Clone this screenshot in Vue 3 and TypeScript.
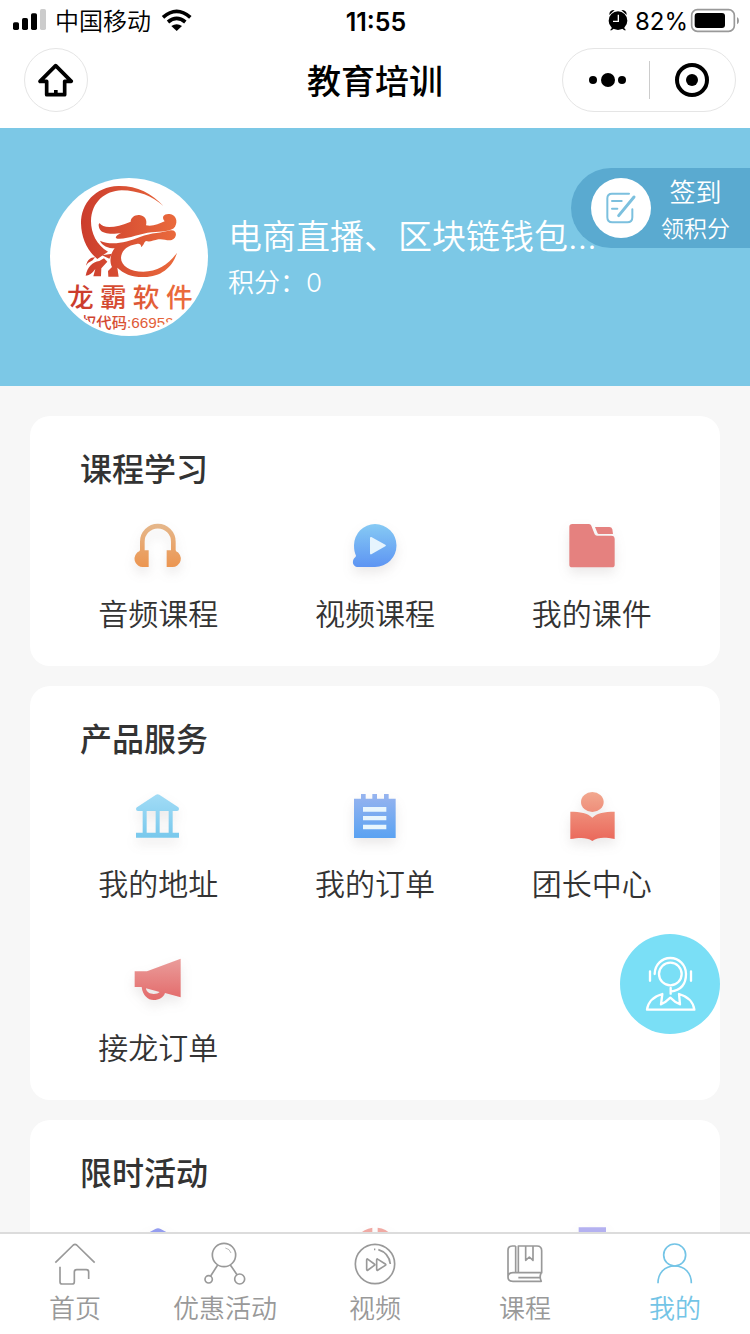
<script setup lang="ts">
interface Entry {
  icon: string
  label?: string
}
interface Section {
  title: string
  entries: Entry[]
}
interface Tab {
  icon: string
  label: string
  active?: boolean
}

const sections: Section[] = [
  {
    title: '课程学习',
    entries: [
      { icon: 'headphones', label: '音频课程' },
      { icon: 'play', label: '视频课程' },
      { icon: 'folder', label: '我的课件' },
    ],
  },
  {
    title: '产品服务',
    entries: [
      { icon: 'bank', label: '我的地址' },
      { icon: 'order', label: '我的订单' },
      { icon: 'reader', label: '团长中心' },
      { icon: 'megaphone', label: '接龙订单' },
    ],
  },
  {
    title: '限时活动',
    entries: [{ icon: 'hexagon' }, { icon: 'disc' }, { icon: 'board' }],
  },
]

const tabs: Tab[] = [
  { icon: 'tab-home', label: '首页' },
  { icon: 'tab-share', label: '优惠活动' },
  { icon: 'tab-video', label: '视频' },
  { icon: 'tab-book', label: '课程' },
  { icon: 'tab-me', label: '我的', active: true },
]
</script>

<template>
  <div class="page">
    <svg class="sprite" aria-hidden="true">
      <defs>
        <linearGradient id="g-orange" x1="0" y1="252" x2="0" y2="382" gradientUnits="userSpaceOnUse">
          <stop offset="0" stop-color="#e5b78b" /><stop offset="1" stop-color="#ec9550" />
        </linearGradient>
        <linearGradient id="g-play" x1="0" y1="252" x2="0" y2="382" gradientUnits="userSpaceOnUse">
          <stop offset="0" stop-color="#86caf4" /><stop offset="1" stop-color="#5d94f3" />
        </linearGradient>
        <linearGradient id="g-bank" x1="0" y1="72" x2="0" y2="204" gradientUnits="userSpaceOnUse">
          <stop offset="0" stop-color="#a2dcf6" /><stop offset="1" stop-color="#78c8ec" />
        </linearGradient>
        <linearGradient id="g-order" x1="0" y1="72" x2="0" y2="204" gradientUnits="userSpaceOnUse">
          <stop offset="0" stop-color="#97b4ef" /><stop offset="1" stop-color="#5aa2f2" />
        </linearGradient>
        <linearGradient id="g-reader" x1="0" y1="66" x2="0" y2="214" gradientUnits="userSpaceOnUse">
          <stop offset="0" stop-color="#f2a88f" /><stop offset="1" stop-color="#ea675a" />
        </linearGradient>
        <linearGradient id="g-mega" x1="0" y1="86" x2="0" y2="210" gradientUnits="userSpaceOnUse">
          <stop offset="0" stop-color="#ea9d9b" /><stop offset="1" stop-color="#e36a6a" />
        </linearGradient>
      </defs>

      <symbol id="headphones" viewBox="175 198 240 240">
        <path d="M248 334V305a46 46 0 0 1 93 0v29" fill="none" stroke="url(#g-orange)" stroke-width="14" />
        <path d="M267 331v50h-15a25 25 0 0 1-12-48v-2zM321 331v50h15a25 25 0 0 0 12-48v-2z" fill="url(#g-orange)" />
      </symbol>
      <symbol id="play" viewBox="825 198 240 240">
        <path d="M945 252a64 64 0 0 1 0 129h-50c-14 0-20-13-14-24 3-5 7-7 7-10-4-9-6-18-6-31a64 64 0 0 1 63-64z" fill="url(#g-play)" />
        <path d="M934 291l42 23q4 2 0 5l-42 24q-4 1-4-3v-46q0-4 4-3z" fill="#e6f4fd" />
      </symbol>
      <symbol id="folder" viewBox="155 18 240 240">
        <path d="M216 72h50q5 0 7 5l10 26q2 4 7 4h43q10 0 10 10v77q0 8-8 8H216q-9 0-9-8V80q0-8 9-8z" fill="#e5817f" />
        <path d="M284 81h43q7 0 9 7l2 14h-42q-4 0-5-4z" fill="#e5817f" />
      </symbol>
      <symbol id="bank" viewBox="145 18 240 240">
        <path d="M259 74q5-3 10 0l56 37q3 2 3 6 0 6-6 6h-13v65h19v15H199v-15h20v-65h-14q-6 0-6-6 0-4 4-6zM231 123v65h27v-65zm39 0v65h27v-65z" fill="url(#g-bank)" />
      </symbol>
      <symbol id="order" viewBox="795 18 240 240">
        <path d="M852 86h21V72h14v14h20V72h14v14h21V72h14v14h21v118H852z" fill="url(#g-order)" />
        <path d="M879 111h70v14h-70zm0 27h70v13h-70zm0 26h70v14h-70z" fill="#e8f6fd" />
      </symbol>
      <symbol id="reader" viewBox="125 18 240 240">
        <ellipse cx="246" cy="96" rx="34" ry="30" fill="url(#g-reader)" />
        <path d="M180 125c30 0 52 4 66 18 14-14 36-18 67-18v82c-29-5-50-6-67 6-17-12-38-10-66-6z" fill="url(#g-reader)" />
      </symbol>
      <symbol id="megaphone" viewBox="145 30 240 240">
        <path d="M195 124h37l101-38v116l-47-13c-5 14-18 21-34 21-18 0-33-14-36-39h-21zM229 175c1 12 12 17 23 17 8 0 15-2 18-6z" fill="url(#g-mega)" fill-rule="evenodd" />
      </symbol>
      <symbol id="hexagon" viewBox="355 0 240 240">
        <path d="M467 57q8-4 16 0l46 25q8 4 8 12v52q0 8-8 12l-46 25q-8 4-16 0l-46-25q-8-4-8-12V94q0-8 8-12z" fill="#949df0" />
      </symbol>
      <symbol id="disc" viewBox="1005 0 240 240">
        <path d="M1117 53v67h-58a67 67 0 0 1 58-67zm16 0a67 67 0 0 1 59 67h-59zm-74 83h133a67 67 0 0 1-133 0z" fill="#f0aaa4" />
      </symbol>
      <symbol id="board" viewBox="545 0 240 240">
        <path d="M625 52h82v136h-82z" fill="#b4b1f0" />
      </symbol>

      <symbol id="tab-home" viewBox="153 90 144 144">
        <path d="M166 158l54-53q5-4 10 0l54 53M180 170v45q0 7 7 7h29q7 0 7-7v-29q0-7 7-7h29q7 0 7 7v21" />
      </symbol>
      <symbol id="tab-share" viewBox="603 90 144 144">
        <circle cx="672" cy="135" r="35" />
        <circle cx="626" cy="208" r="11" />
        <circle cx="719" cy="207" r="15" />
        <path d="M653 165l-21 33M691 165l20 29" />
        <path d="M676 114q13 2 17 15" stroke-width="2" />
      </symbol>
      <symbol id="tab-video" viewBox="-57 90 144 144">
        <circle cx="15" cy="162" r="59" />
        <path d="M-10 150v28q0 5 4 2l19-14q3-2 0-4l-19-14q-4-3-4 2zM20 150v28q0 5 4 2l22-14q3-2 0-4l-22-14q-4-3-4 2z" />
        <path d="M12 118h4M25 119q32 10 36 43" />
      </symbol>
      <symbol id="tab-book" viewBox="393 90 144 144">
        <path d="M437 108h-10q-13 0-13 13v80M437 108v79M445 108h56q14 0 14 14v66h-70zM467 108v43l11-10 11 10v-43M445 188h-16q-15 0-15 13 0 13 15 13h85q-7-13 0-26M445 203h65" />
      </symbol>
      <symbol id="tab-me" viewBox="843 90 144 144">
        <circle cx="914" cy="135" r="33" />
        <path d="M864 220c0-31 20-52 50-52s50 21 50 52" />
      </symbol>
    </svg>

    <header class="top">
      <div class="status">
        <div class="carrier">
          <svg viewBox="36 24 108 72" width="36" height="24" aria-hidden="true">
            <rect x="39" y="67" width="18" height="23" rx="5" />
            <rect x="66" y="54" width="18" height="36" rx="5" />
            <rect x="93" y="40" width="18" height="50" rx="5" />
            <rect x="120" y="27" width="18" height="63" rx="5" fill="#cccccc" />
          </svg>
          <span>中国移动</span>
          <svg class="wifi" viewBox="483 24 93 72" width="31" height="24" aria-hidden="true">
            <path d="M489 52q41-36 82 0M504 66q26-22 52 0" fill="none" stroke="#000" stroke-width="11" />
            <path d="M514 78q16-11 32 0l-16 15z" />
          </svg>
        </div>
        <time class="clock">11:55</time>
        <div class="power">
          <svg viewBox="201 18 66 78" width="22" height="26" aria-hidden="true">
            <circle cx="234" cy="59" r="28" />
            <path d="M208 42q-1-15 16-15zM260 42q1-15-16-15zM210 88l8-10 5 4-8 6zM258 88l-8-10-5 4 8 6z" />
            <path d="M235 41v20h-16" fill="none" stroke="#fff" stroke-width="4" />
          </svg>
          <span>82%</span>
          <svg viewBox="450 18 150 78" width="50" height="26" aria-hidden="true">
            <rect x="455" y="26" width="128" height="65" rx="17" fill="none" stroke="#999" stroke-width="5" />
            <rect x="464" y="36" width="91" height="45" rx="9" />
            <path d="M591 48q6 3 6 11t-6 11z" fill="#999" />
          </svg>
        </div>
      </div>
      <nav class="nav">
        <button class="home" type="button" aria-label="首页">
          <svg viewBox="75 147 186 186" width="62" height="62" aria-hidden="true">
            <path d="M167 197l-47 47h20v40h54v-40h20z" fill="none" stroke="#000" stroke-width="11" stroke-linejoin="round" />
            <path d="M162 270h11v14h-11z" />
          </svg>
        </button>
        <h1>教育培训</h1>
        <div class="capsule">
          <button type="button" aria-label="更多">
            <svg viewBox="0 0 42 20" width="42" height="20" aria-hidden="true">
              <circle cx="8" cy="10" r="4" /><circle cx="23" cy="10" r="7" /><circle cx="37" cy="10" r="4" />
            </svg>
          </button>
          <button type="button" aria-label="关闭">
            <svg viewBox="0 0 36 36" width="36" height="36" aria-hidden="true">
              <circle cx="18" cy="18" r="15" fill="none" stroke="#000" stroke-width="4" /><circle cx="18" cy="18" r="6" />
            </svg>
          </button>
        </div>
      </nav>
    </header>

    <main class="content">
      <section class="profile">
        <svg class="avatar" viewBox="30 39 474 474" role="img" aria-label="龙霸软件">
          <defs>
            <clipPath id="disc-clip"><circle cx="267" cy="276" r="228" /></clipPath>
            <linearGradient id="g-dragon" x1="120" y1="0" x2="410" y2="0" gradientUnits="userSpaceOnUse">
              <stop offset="0" stop-color="#cb3c2d" /><stop offset="1" stop-color="#ea6a3c" />
            </linearGradient>
          </defs>
          <circle cx="267" cy="276" r="237" fill="#fff" />
          <g clip-path="url(#disc-clip)">
            <g fill="url(#g-dragon)">
              <path d="M371 124C335 84 290 62 235 63C165 66 123 115 123 175C124 220 142 258 172 282L204 260C170 240 153 205 153 168C155 110 195 78 245 76C295 77 335 92 371 124Z" />
              <path d="M179 175C190 192 230 188 272 170C272 158 284 149 298 150C316 152 322 166 318 181C336 186 357 177 374 169C362 154 374 145 389 147C407 149 415 168 405 185C395 200 365 199 335 202C300 205 262 224 232 221C222 218 230 209 245 203C222 208 190 208 181 195C176 188 174 176 179 175Z" />
              <path d="M180 227C215 243 260 232 300 216C335 203 365 204 392 196C412 194 413 218 395 225C382 229 370 220 355 223C340 226 330 232 318 228C312 230 312 242 303 246C304 238 298 234 290 237C262 242 245 255 243 278C243 302 270 320 310 320C352 319 385 300 411 263C398 308 360 338 308 336C275 336 250 326 232 308L236 335H205L204 318L216 306C208 290 210 268 224 250C205 250 185 242 180 227Z" />
              <path d="M138 302C142 286 150 277 165 277L158 286Q144 292 138 302ZM137 332C142 306 157 291 178 288L192 280L202 290L184 310L183 334H160L166 312Q152 332 137 332ZM186 271L216 266L208 281Z" />
            </g>
            <g fill="url(#g-dragon)" class="logo-text">
              <text x="81" y="427" font-size="80">龙</text>
              <text x="180" y="427" font-size="80">霸</text>
              <text x="278" y="427" font-size="80">软</text>
              <text x="378" y="427" font-size="80">件</text>
              <text x="123" y="488" font-size="46">权代码<tspan class="logo-code">:66958</tspan></text>
            </g>
          </g>
        </svg>
        <div class="who">
          <p class="name">电商直播、区块链钱包、软件开发</p>
          <p class="points">积分：0</p>
        </div>
        <button class="sign" type="button">
          <span class="sign-icon">
            <svg viewBox="93 54 180 180" width="60" height="60" aria-hidden="true">
              <path d="M207 101h-51q-14 0-14 14v57q0 15 15 15h45q15 0 15-15v-24M156 123h29M156 146h16" />
              <path class="pen" d="M222 111l-46 56" />
            </svg>
          </span>
          <span class="sign-text"><span>签到</span><small>领积分</small></span>
        </button>
      </section>

      <div class="cards">
        <section v-for="section in sections" :key="section.title" class="card">
          <h2>{{ section.title }}</h2>
          <div class="grid">
            <component
              :is="entry.label ? 'button' : 'div'"
              v-for="entry in section.entries"
              :key="entry.icon"
              class="entry"
            >
              <svg class="entry-icon" aria-hidden="true"><use :href="'#' + entry.icon" /></svg>
              <span v-if="entry.label">{{ entry.label }}</span>
            </component>
          </div>
        </section>
      </div>
    </main>

    <button class="service" type="button" aria-label="客服">
      <svg viewBox="330 492 300 300" aria-hidden="true">
        <circle cx="481" cy="612" r="34" />
        <path d="M434 612a47 48 0 1 1 94 0q0 47-46 53M482 654v17M420 604v28M543 604v28" />
        <path d="M457 672q-41 12-46 47h142q-5-35-46-47l3 31-15-8-14-12-14 12-14 8z" />
      </svg>
    </button>

    <nav class="tabs">
      <a v-for="tab in tabs" :key="tab.icon" href="#" class="tab" :class="{ active: tab.active }">
        <svg aria-hidden="true"><use :href="'#' + tab.icon" /></svg>
        <span>{{ tab.label }}</span>
      </a>
    </nav>
  </div>
</template>

<style>
body {
  margin: 0;
}
</style>

<style scoped>
.page {
  height: 100vh;
  display: flex;
  flex-direction: column;
  background: #f7f7f7;
  color: #333;
  font-family: Inter, "Noto Sans CJK SC", sans-serif;
}
.sprite {
  position: absolute;
  width: 0;
  height: 0;
}
svg {
  display: block;
  flex: none;
}
button {
  margin: 0;
  padding: 0;
  border: 0;
  background: none;
  color: inherit;
  font: inherit;
}
h1,
h2,
p {
  margin: 0;
}
.top {
  background: #fff;
  color: #000;
}
.status {
  display: grid;
  grid-template-columns: 1fr auto 1fr;
  align-items: center;
  height: 40px;
  padding: 0 10px 0 12px;
  font-size: 24px;
  line-height: 36px;
}
.carrier,
.power {
  display: flex;
  align-items: center;
}
.carrier {
  gap: 7px;
}
.carrier span,
.power span,
.clock {
  padding-top: 3px;
}
.carrier span {
  font-weight: 350;
}
.wifi {
  margin-left: 3px;
}
.power {
  justify-content: flex-end;
  gap: 2px;
}
.power span {
  margin-left: 4px;
}
.clock {
  font-size: 25px;
  font-weight: 600;
}
.nav {
  display: grid;
  grid-template-columns: 1fr auto 1fr;
  align-items: center;
  height: 80px;
  padding: 0 14px 8px;
}
.home {
  box-sizing: border-box;
  width: 64px;
  height: 64px;
  margin-left: 10px;
  border: 1px solid #e5e5e5;
  border-radius: 50%;
  display: grid;
  place-items: center;
}
h1 {
  padding-top: 4px;
  font-size: 34px;
  line-height: 48px;
  font-weight: 500;
}
.capsule {
  box-sizing: border-box;
  justify-self: end;
  display: flex;
  align-items: center;
  width: 174px;
  height: 64px;
  border: 1px solid #e5e5e5;
  border-radius: 32px;
}
.capsule button {
  flex: 1;
  height: 38px;
  display: grid;
  place-items: center;
}
.capsule button + button {
  border-left: 1px solid #ccc;
}
.content {
  flex: 1;
  min-height: 0;
  overflow-y: auto;
  scrollbar-width: none;
}
.profile {
  position: relative;
  display: flex;
  align-items: center;
  gap: 20px;
  padding: 50px;
  background: #7cc8e6;
  color: #fff;
}
.avatar {
  width: 158px;
  height: 158px;
}
.logo-text {
  font-family: "Noto Sans CJK SC", sans-serif;
  font-weight: 500;
}
.logo-code {
  font-family: "Liberation Sans", sans-serif;
}
.who {
  width: 370px;
  min-width: 0;
  padding-top: 4px;
}
.name {
  font-size: 34px;
  line-height: 48px;
  overflow: hidden;
  text-overflow: ellipsis;
  white-space: nowrap;
}
.points {
  font-size: 26px;
  line-height: 44px;
}
.name,
.points {
  font-weight: 350;
}
.sign {
  position: absolute;
  top: 40px;
  right: 0;
  display: flex;
  align-items: center;
  gap: 10px;
  height: 80px;
  padding: 0 20px;
  border-radius: 40px 0 0 40px;
  background: #5aaad0;
}
.sign-icon {
  border-radius: 50%;
  background: #fff;
}
.sign-icon path {
  fill: none;
  stroke: #7cc0de;
  stroke-width: 6px;
  stroke-linecap: round;
}
.sign-icon .pen {
  stroke-width: 9px;
}
.sign-text {
  display: flex;
  flex-direction: column;
  align-items: center;
  padding-top: 4px;
  font-size: 26px;
  line-height: 38px;
  font-weight: 350;
}
.sign-text small {
  font-size: 23px;
  line-height: 34px;
}
.cards {
  display: flex;
  flex-direction: column;
  gap: 20px;
  padding: 30px;
}
.card {
  padding: 32px 20px 32px;
  border-radius: 20px;
  background: #fff;
}
h2 {
  padding-left: 30px;
  font-size: 32px;
  line-height: 44px;
  font-weight: 500;
}
.grid {
  display: grid;
  grid-template-columns: repeat(3, 1fr);
  row-gap: 36px;
  margin-top: 14px;
}
.entry {
  display: flex;
  flex-direction: column;
  align-items: center;
  gap: 8px;
  font-size: 30px;
  line-height: 40px;
  font-weight: 350;
}
.entry-icon {
  width: 80px;
  height: 80px;
  filter: drop-shadow(0 6px 6px rgba(90, 70, 70, 0.12));
}
.service {
  position: fixed;
  right: 30px;
  bottom: 300px;
  width: 100px;
  height: 100px;
  border-radius: 50%;
  background: #7adff6;
}
.service svg {
  fill: none;
  stroke: #fff;
  stroke-width: 7px;
  stroke-linecap: round;
  stroke-linejoin: round;
}
.tabs {
  display: grid;
  grid-template-columns: repeat(5, 1fr);
  border-top: 2px solid #dcdcdc;
  background: #fff;
}
.tab {
  display: flex;
  flex-direction: column;
  align-items: center;
  gap: 2px;
  padding: 6px 0;
  color: #999;
  font-size: 26px;
  line-height: 38px;
  font-weight: 350;
  text-decoration: none;
}
.tab svg {
  width: 48px;
  height: 48px;
  fill: none;
  stroke: currentColor;
  stroke-width: 5px;
  stroke-linejoin: round;
}
.tab.active {
  color: #73c4e6;
}
</style>
